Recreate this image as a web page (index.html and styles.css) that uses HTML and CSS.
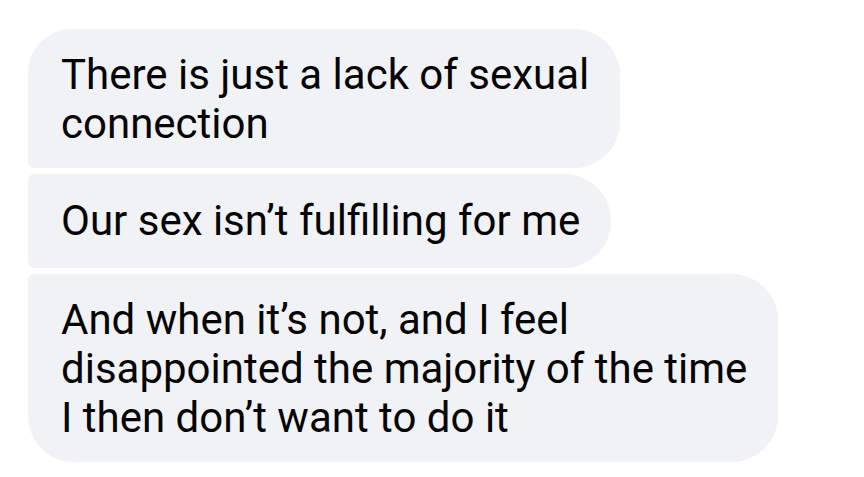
FILE: index.html
```html
<!DOCTYPE html>
<html>
<head>
<meta charset="utf-8">
<link rel="stylesheet" href="styles.css">
</head>
<body>
<div class="thread">
  <div class="bubble first">There is just a lack of sexual<br>connection</div>
  <div class="bubble middle">Our sex isn’t fulfilling for me</div>
  <div class="bubble last">And when it’s not, and I feel<br>disappointed the majority of the time<br>I then don’t want to do it</div>
</div>
</body>
</html>
```

FILE: styles.css
```css
html, body {
  margin: 0;
  padding: 0;
  background: #ffffff;
}
.thread {
  display: flex;
  flex-direction: column;
  align-items: flex-start;
  gap: 6px;
  padding: 29px 0 0 28px;
}
.bubble {
  background: #f1f2f6;
  color: #050505;
  font-family: Roboto, "Liberation Sans", sans-serif;
  font-size: 42px;
  line-height: 49px;
  padding: 21px 31px 20px 33px;
  white-space: nowrap;
}
.first {
  border-radius: 44px 46px 46px 6px;
}
.middle {
  padding-top: 22px;
  padding-bottom: 23px;
  border-radius: 6px 47px 47px 6px;
}
.last {
  border-radius: 6px 46px 46px 46px;
}
```
